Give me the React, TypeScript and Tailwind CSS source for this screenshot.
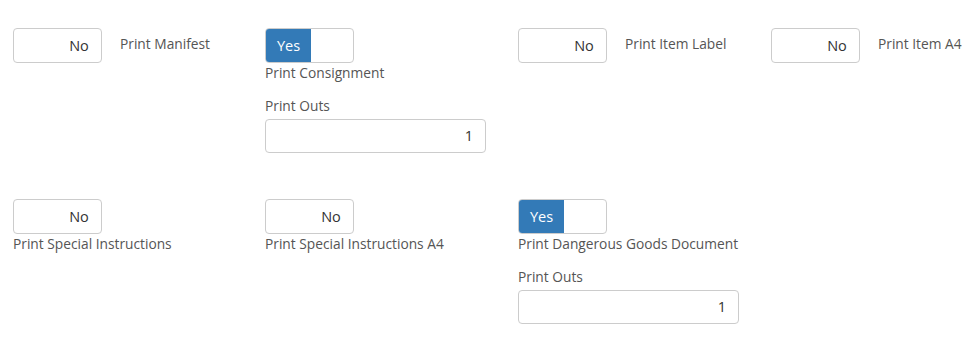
const font = { fontFamily: '"Open Sans", "Noto Sans", sans-serif' };

function Toggle({ on }: { on: boolean }) {
  return (
    <div className="flex w-[89px] h-[35px] shrink-0 rounded-[4px] border border-[#cccccc] bg-white overflow-hidden text-[14.5px]">
      {on ? (
        <>
          <div className="w-[45px] bg-[#337ab7] text-white flex items-center justify-center">Yes</div>
          <div className="flex-1" />
        </>
      ) : (
        <>
          <div className="flex-1" />
          <div className="w-[44px] text-[#333333] flex items-center justify-center">No</div>
        </>
      )}
    </div>
  );
}

function PrintOuts() {
  return (
    <div className="mt-[15px]">
      <div className="leading-[18px] mb-[4px]">Print Outs</div>
      <div className="w-[221px] h-[34px] rounded-[4px] border border-[#cccccc] bg-white flex items-center justify-end px-3 text-[14.5px] text-[#333333]">
        1
      </div>
    </div>
  );
}

function InlineField({ label }: { label: string }) {
  return (
    <div className="flex items-start gap-[18px]">
      <Toggle on={false} />
      <span className="pt-[7px] leading-[18px] whitespace-nowrap">{label}</span>
    </div>
  );
}

function StackedField({ label, on, outs }: { label: string; on: boolean; outs?: boolean }) {
  return (
    <div className="flex flex-col">
      <Toggle on={on} />
      <span className="pt-[1px] leading-[18px] whitespace-nowrap">{label}</span>
      {outs && <PrintOuts />}
    </div>
  );
}

export default function App() {
  return (
    <div className="w-[975px] h-[340px] bg-white overflow-hidden pl-[13px] pt-[28px] text-[13.75px] text-[#555555]" style={font}>
      <div className="grid grid-cols-[252px_253px_253px_253px] items-start">
        <InlineField label="Print Manifest" />
        <StackedField label="Print Consignment" on outs />
        <InlineField label="Print Item Label" />
        <InlineField label="Print Item A4" />
      </div>
      <div className="grid grid-cols-[252px_253px_253px_253px] items-start mt-[46px]">
        <StackedField label="Print Special Instructions" on={false} />
        <StackedField label="Print Special Instructions A4" on={false} />
        <StackedField label="Print Dangerous Goods Document" on outs />
      </div>
    </div>
  );
}
